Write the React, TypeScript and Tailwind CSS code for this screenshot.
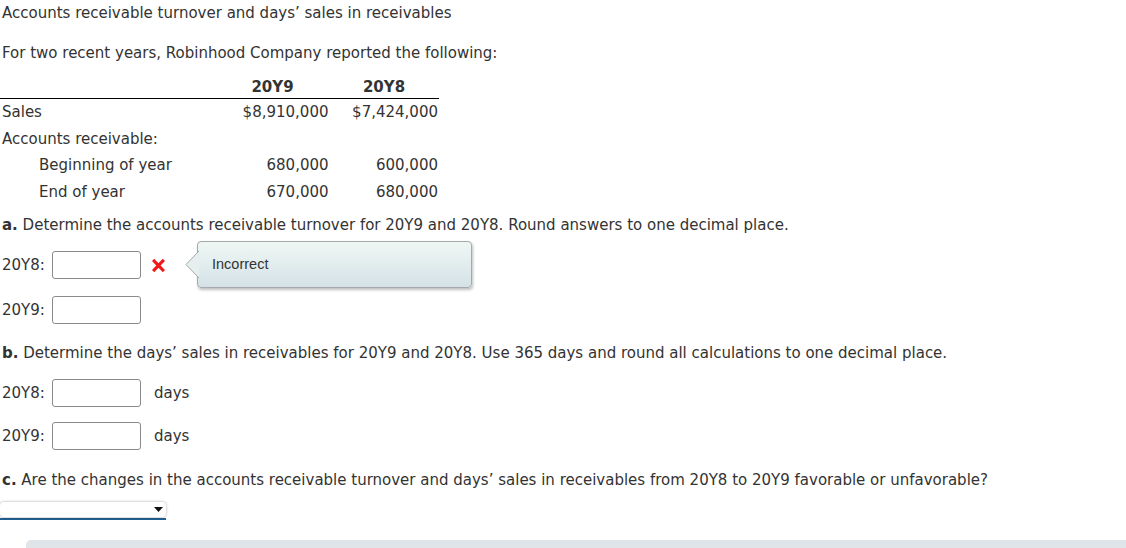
import React from "react";

const Row = ({ label, a, b, indent }: { label: string; a: string; b: string; indent?: boolean }) => (
  <div className="flex h-[26.5px] items-center">
    <div className={`w-[216px] ${indent ? "pl-[37px]" : ""}`}>{label}</div>
    <div className="w-[113px] pr-[1px] text-right">{a}</div>
    <div className="w-[110px] pr-[1px] text-right">{b}</div>
  </div>
);

const AnswerInput = () => (
  <div className="h-[28px] w-[89px] rounded-[3px] border border-[#8a8a8a] bg-white" />
);

export default function App() {
  return (
    <div className="relative h-[548px] w-[1126px] overflow-hidden bg-white font-['DejaVu_Sans',Verdana,sans-serif] text-[15px] leading-[18px] text-[#333]">
      <div className="pl-[2px] pt-[4px]">
        <p className="h-[18px]">Accounts receivable turnover and days’ sales in receivables</p>
        <p className="mt-[22px] h-[18px]">For two recent years, Robinhood Company reported the following:</p>

        {/* financial table */}
        <div className="-ml-[2px] mt-[13px] w-[439px]">
          <div className="flex h-[24px] items-center border-b border-black font-bold">
            <div className="w-[216px]" />
            <div className="w-[113px] text-center">20Y9</div>
            <div className="w-[110px] text-center">20Y8</div>
          </div>
          <div className="pl-[2px]">
            <Row label="Sales" a="$8,910,000" b="$7,424,000" />
            <Row label="Accounts receivable:" a="" b="" />
            <Row label="Beginning of year" a="680,000" b="600,000" indent />
            <Row label="End of year" a="670,000" b="680,000" indent />
          </div>
        </div>

        <p className="mt-[11px] h-[18px]">
          <span className="font-bold">a.</span> Determine the accounts receivable turnover for 20Y9 and 20Y8. Round answers to one decimal place.
        </p>

        <div className="relative mt-[17px] flex h-[28px] items-center">
          <span className="w-[50px]">20Y8:</span>
          <AnswerInput />
          <svg className="ml-[11px] h-[13px] w-[13px]" viewBox="0 0 13 13">
            <path d="M2.2 2 L10.8 11 M10.8 2 L2.2 11" stroke="#f01818" strokeWidth="3.2" strokeLinecap="square" />
          </svg>
          {/* feedback popover */}
          <div className="absolute left-[195px] top-[-10px] h-[47px] w-[275px] rounded-[4px] border border-[#a4a9ab] bg-gradient-to-b from-[#eff7f4] to-[#d4e2e7] pl-[14px] pt-[14px] font-['Liberation_Sans',Arial,sans-serif] text-[14.5px] leading-[16px] shadow-[1px_2px_3px_rgba(0,0,0,0.25)]">
            <svg className="absolute -left-[13px] top-[9px] h-[27px] w-[14px]" viewBox="0 0 14 27">
              <path d="M14 0 L1 13.5 L14 27" fill="#e6efee" stroke="#a4a9ab" strokeWidth="1" />
            </svg>
            Incorrect
          </div>
        </div>

        <div className="mt-[17px] flex h-[28px] items-center">
          <span className="w-[50px]">20Y9:</span>
          <AnswerInput />
        </div>

        <p className="mt-[20px] h-[18px]">
          <span className="font-bold">b.</span> Determine the days’ sales in receivables for 20Y9 and 20Y8. Use 365 days and round all calculations to one decimal place.
        </p>

        <div className="mt-[17px] flex h-[28px] items-center">
          <span className="w-[50px]">20Y8:</span>
          <AnswerInput />
          <span className="ml-[13px]">days</span>
        </div>

        <div className="mt-[15px] flex h-[28px] items-center">
          <span className="w-[50px]">20Y9:</span>
          <AnswerInput />
          <span className="ml-[13px]">days</span>
        </div>

        <p className="mt-[21px] h-[18px]">
          <span className="font-bold">c.</span> Are the changes in the accounts receivable turnover and days’ sales in receivables from 20Y8 to 20Y9 favorable or unfavorable?
        </p>
      </div>

      {/* dropdown */}
      <div className="mt-[13px] w-[166px]">
        <div className="relative h-[15px] rounded-[4px] bg-white shadow-[0_0_3px_rgba(0,0,0,0.35)]">
          <svg className="absolute right-[3px] top-[5px] h-[5px] w-[9px]" viewBox="0 0 9 5">
            <path d="M0 0 L9 0 L4.5 5 Z" fill="#111" />
          </svg>
        </div>
        <div className="mt-[1px] h-[2px] bg-[#1f5f8f]" />
      </div>

      {/* bottom panel edge */}
      <div className="absolute bottom-0 left-[26px] h-[8px] w-[1100px] rounded-tl-[5px] bg-[#dfe5e8]" />
    </div>
  );
}
